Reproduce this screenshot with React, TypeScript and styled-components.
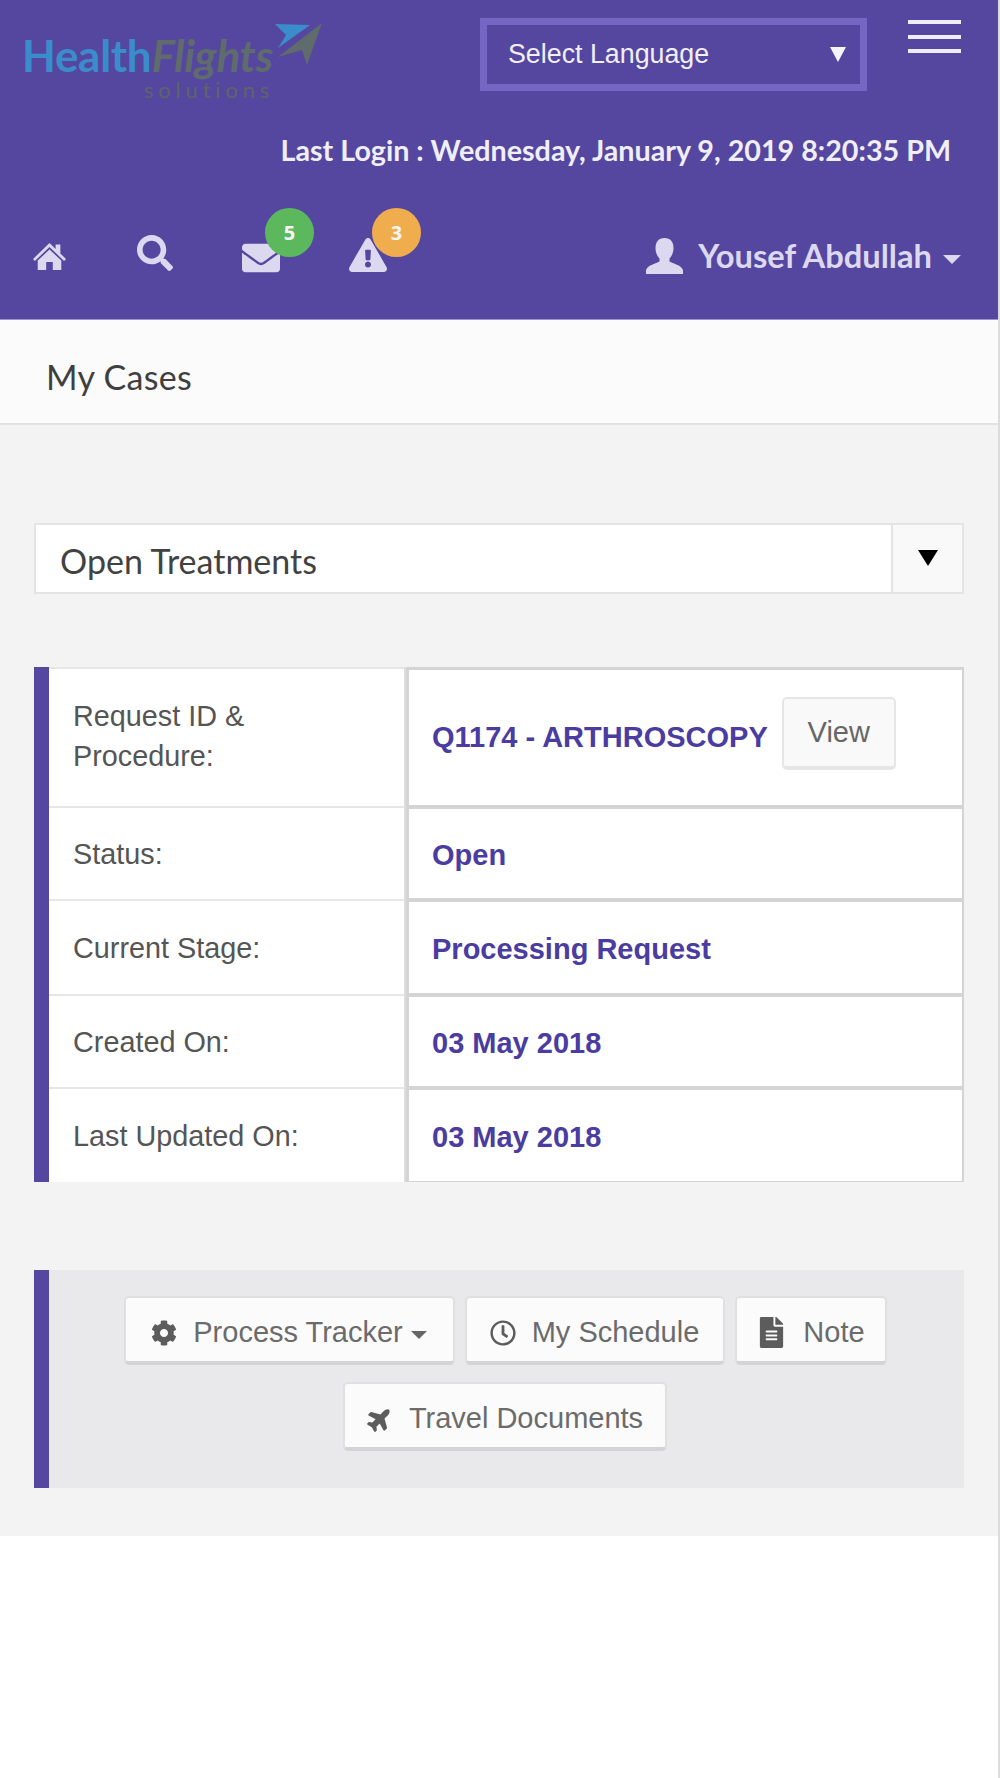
import React from 'react';
import styled, { createGlobalStyle } from 'styled-components';
import { FaCog, FaExclamationTriangle, FaEnvelope, FaFileAlt, FaPlane, FaRegClock, FaSearch } from 'react-icons/fa';

const GlobalStyle = createGlobalStyle`
  html, body {
    margin: 0;
    padding: 0;
    background: #fff;
  }
  * {
    box-sizing: border-box;
  }
`;

const Shell = styled.div`
  width: 1000px;
  height: 1778px;
  border-right: 2px solid #dcdcdc;
  background: #fff;
  font-family: "Liberation Sans", Arial, sans-serif;
`;

const Header = styled.header`
  height: 320px;
  background: #55479f;
  border-bottom: 1px solid #9d93d2;
  display: flex;
  flex-direction: column;
`;

const TopBar = styled.div`
  display: flex;
  align-items: flex-start;
  height: 104px;
  padding: 18px 37px 0 22px;
`;

const Logo = styled.div`
  width: 300px;
  height: 84px;
  position: relative;
  flex: none;
`;

const LogoWords = styled.div`
  position: absolute;
  left: 0;
  top: 17px;
  font-family: Lato, sans-serif;
  font-size: 44px;
  font-weight: 700;
  letter-spacing: -0.3px;
  line-height: 40px;
  white-space: nowrap;
`;

const LogoHealth = styled.span`
  display: inline-block;
  color: #3b8ccb;
`;

const LogoFlights = styled.span`
  display: inline-block;
  color: #5f6b6c;
  font-style: italic;
`;

const LogoSub = styled.div`
  position: absolute;
  left: 122px;
  top: 61px;
  font-family: Lato, sans-serif;
  font-size: 22px;
  letter-spacing: 4.8px;
  line-height: 22px;
  color: #5c6568;
`;

const LogoPlane = styled.svg`
  position: absolute;
  left: 253px;
  top: 5px;
`;

const LangSelect = styled.div`
  width: 387px;
  height: 73px;
  margin-left: 158px;
  border: 7px solid #7566c4;
  display: flex;
  align-items: center;
  justify-content: space-between;
  padding: 0 14px 0 21px;
  color: #f1effa;
  font-size: 26.8px;
`;

const Burger = styled.div`
  margin-left: 41px;
  margin-top: 2px;
  width: 53px;
  display: flex;
  flex-direction: column;
  gap: 10.7px;
`;

const BurgerLine = styled.span`
  display: block;
  height: 4px;
  background: #eeecf8;
`;

const LastLogin = styled.div`
  height: 118px;
  padding: 28px 47px 0 0;
  text-align: right;
  font-family: Lato, sans-serif;
  font-size: 28.7px;
  font-weight: 700;
  line-height: 36px;
  color: #f0eef9;
`;

const NavBar = styled.nav`
  flex: 1;
  display: flex;
  align-items: flex-start;
  padding: 0 37px 0 33px;
  color: #dcd8ef;
`;

const NavIcon = styled.span<{ $width: number; $top: number }>`
  position: relative;
  display: block;
  width: ${p => p.$width}px;
  margin-top: ${p => p.$top}px;
  line-height: 0;
`;

const Badge = styled.span<{ $color: string; $top: number }>`
  position: absolute;
  left: 23px;
  top: ${p => p.$top}px;
  width: 49px;
  height: 49px;
  border-radius: 50%;
  background: ${p => p.$color};
  color: #f5f5f5;
  font-family: "Noto Sans", sans-serif;
  font-size: 20px;
  font-weight: 700;
  line-height: 49px;
  text-align: center;
`;

const UserMenu = styled.div`
  margin-left: auto;
  margin-top: 14px;
  display: flex;
  align-items: center;
  font-family: Lato, sans-serif;
  font-size: 32.7px;
  font-weight: 700;
  line-height: 40px;
`;

const UserName = styled.span`
  margin-left: 15px;
`;

const Caret = styled.span<{ $color: string; $size: number }>`
  display: inline-block;
  width: 0;
  height: 0;
  border-left: ${p => p.$size}px solid transparent;
  border-right: ${p => p.$size}px solid transparent;
  border-top: ${p => p.$size}px solid ${p => p.$color};
`;

const UserCaret = styled(Caret)`
  margin-left: 11px;
  margin-top: 6px;
`;

const SubHeader = styled.div`
  height: 105px;
  padding: 37px 0 0 46px;
  background: #fbfbfb;
  border-bottom: 2px solid #e2e2e2;
  font-family: Lato, sans-serif;
  font-size: 34px;
  letter-spacing: 0.3px;
  line-height: 40px;
  color: #3f3f3f;
`;

const Main = styled.main`
  height: 1111px;
  background: #f3f3f3;
  padding: 98px 34px 0 34px;
`;

const Filter = styled.div`
  height: 71px;
  display: flex;
  background: #fff;
  border: 2px solid #e4e4e4;
`;

const FilterText = styled.div`
  flex: 1;
  padding: 3px 0 0 24px;
  font-family: Lato, sans-serif;
  font-size: 34px;
  line-height: 65px;
  color: #424242;
`;

const FilterArrow = styled.div`
  width: 71px;
  border-left: 2px solid #e4e4e4;
  background: #f9f9f9;
  display: flex;
  justify-content: center;
  padding-top: 25px;
`;

const CaseTable = styled.div`
  margin-top: 73px;
  border-left: 15px solid #55479f;
  background: #fff;
`;

const CaseRow = styled.div<{ $height: number }>`
  height: ${p => p.$height}px;
  display: grid;
  grid-template-columns: 357px 1fr;
`;

const LabelCell = styled.div<{ $raised?: boolean }>`
  display: flex;
  align-items: center;
  padding: 0 0 ${p => (p.$raised ? 3 : 0)}px 24px;
  border-top: 2px solid #e6e6e6;
  border-right: 2px solid #dcdcdc;
  font-size: 28.8px;
  line-height: 40px;
  color: #555;
`;

const ValueCell = styled.div<{ $raised?: boolean }>`
  display: flex;
  align-items: center;
  padding: ${p => (p.$raised ? 0 : 4)}px 0 0 23px;
  border: 2px solid #d4d4d4;
  border-top-width: 3px;
  border-left-width: 3px;
  border-bottom-width: 1px;
  font-size: 29px;
  font-weight: 700;
  color: #4a3ca0;
`;

const ViewButton = styled.button`
  margin-left: 14px;
  margin-top: -9px;
  width: 114px;
  height: 73px;
  background: #f9f9f9;
  border: 2px solid #e6e6e6;
  border-bottom-width: 4px;
  border-radius: 5px;
  font-family: "Liberation Sans", Arial, sans-serif;
  font-size: 29px;
  color: #666;
`;

const ActionPanel = styled.div`
  margin-top: 88px;
  height: 218px;
  border-left: 15px solid #55479f;
  background: #e9e9eb;
  padding: 26px 3px 0 0;
  display: flex;
  flex-wrap: wrap;
  justify-content: center;
  align-content: flex-start;
  column-gap: 10px;
  row-gap: 17px;
`;

const ActionButton = styled.button<{ $width: number }>`
  width: ${p => p.$width}px;
  height: 69px;
  display: flex;
  align-items: center;
  justify-content: center;
  gap: 16px;
  padding: 6px 0 0;
  background: #fbfbfb;
  border: 2px solid #e0e0e0;
  border-bottom: 4px solid #d4d4d4;
  border-radius: 5px;
  font-family: "Liberation Sans", Arial, sans-serif;
  font-size: 29px;
  color: #6b6b6b;

  svg {
    color: #5c5c5c;
    flex: none;
  }
`;

const ActionCaret = styled(Caret)`
  margin-left: -8px;
  margin-top: 4px;
`;

const PlaneIcon = styled(FaPlane)`
  transform: rotate(-45deg);
`;

const HomeIcon = () => (
  <svg width="33" height="28" viewBox="0 0 35 28" fill="currentColor" preserveAspectRatio="none">
    <path d="M17.5 1 L24 7 V2.5 H29 V11.5 L35 17 L33 19 L17.5 5 L2 19 L0 17 Z" />
    <path d="M17.5 7.5 L30 18.5 V28 H21 V20 H14 V28 H5 V18.5 Z" />
  </svg>
);

const UserIcon = () => (
  <svg width="37" height="36" viewBox="0 0 37 36" fill="currentColor">
    <path d="M18.5 0 C24.5 0 27.5 4 27.5 10 C27.5 14 26 18 23.5 20.5 V23.5 C27 26 35 26.5 37 32 V36 H0 V32 C2 26.5 10 26 13.5 23.5 V20.5 C11 18 9.5 14 9.5 10 C9.5 4 12.5 0 18.5 0 Z" />
  </svg>
);

const rows = [
  { id: 'request', height: 139, label: <>Request ID &<br />Procedure:</>, value: 'Q1174 - ARTHROSCOPY', action: true },
  { id: 'status', height: 93, label: 'Status:', value: 'Open' },
  { id: 'stage', height: 95, label: 'Current Stage:', value: 'Processing Request' },
  { id: 'created', height: 93, label: 'Created On:', value: '03 May 2018' },
  { id: 'updated', height: 95, label: 'Last Updated On:', value: '03 May 2018' },
];

export default function App() {
  return (
    <Shell>
      <GlobalStyle />
      <Header>
        <TopBar>
          <Logo>
            <LogoWords>
              <LogoHealth>Health</LogoHealth>
              <LogoFlights>Flights</LogoFlights>
            </LogoWords>
            <LogoSub>solutions</LogoSub>
            <LogoPlane width="48" height="44" viewBox="0 0 48 44">
              <path d="M0 1 L35 2 L3 25 L11 12 Z" fill="#3b8ccb" />
              <path d="M47 0 L32 42 L27 27 L3 34 Z" fill="#5f6b6c" />
            </LogoPlane>
          </Logo>
          <LangSelect>
            <span>Select Language</span>
            <svg width="16" height="15" viewBox="0 0 16 15"><path d="M0 0 H16 L8 15 Z" fill="#f5f4fb" /></svg>
          </LangSelect>
          <Burger>
            <BurgerLine />
            <BurgerLine />
            <BurgerLine />
          </Burger>
        </TopBar>
        <LastLogin>Last Login : Wednesday, January 9, 2019 8:20:35 PM</LastLogin>
        <NavBar>
          <NavIcon $width={104} $top={20}><HomeIcon /></NavIcon>
          <NavIcon $width={105} $top={13}><FaSearch size={36} /></NavIcon>
          <NavIcon $width={107} $top={17}>
            <FaEnvelope size={38} />
            <Badge $color="#5cb85c" $top={-31}>5</Badge>
          </NavIcon>
          <NavIcon $width={40} $top={14}>
            <FaExclamationTriangle size={38} />
            <Badge $color="#f0ad4e" $top={-28}>3</Badge>
          </NavIcon>
          <UserMenu>
            <UserIcon />
            <UserName>Yousef Abdullah</UserName>
            <UserCaret $color="#dcd8ef" $size={9} />
          </UserMenu>
        </NavBar>
      </Header>
      <SubHeader>My Cases</SubHeader>
      <Main>
        <Filter>
          <FilterText>Open Treatments</FilterText>
          <FilterArrow>
            <svg width="20" height="16" viewBox="0 0 20 16"><path d="M0 0 H20 L10 16 Z" fill="#000" /></svg>
          </FilterArrow>
        </Filter>
        <CaseTable>
          {rows.map(row => (
            <CaseRow key={row.id} $height={row.height}>
              <LabelCell $raised={row.action}><span>{row.label}</span></LabelCell>
              <ValueCell $raised={row.action}>
                <span>{row.value}</span>
                {row.action && <ViewButton>View</ViewButton>}
              </ValueCell>
            </CaseRow>
          ))}
        </CaseTable>
        <ActionPanel>
          <ActionButton $width={331}>
            <FaCog size={26} />
            <span>Process Tracker</span>
            <ActionCaret $color="#666" $size={8} />
          </ActionButton>
          <ActionButton $width={260}>
            <FaRegClock size={26} />
            <span>My Schedule</span>
          </ActionButton>
          <ActionButton $width={152}>
            <FaFileAlt size={31} />
            <span>Note</span>
          </ActionButton>
          <ActionButton $width={324}>
            <PlaneIcon size={26} />
            <span>Travel Documents</span>
          </ActionButton>
        </ActionPanel>
      </Main>
    </Shell>
  );
}
